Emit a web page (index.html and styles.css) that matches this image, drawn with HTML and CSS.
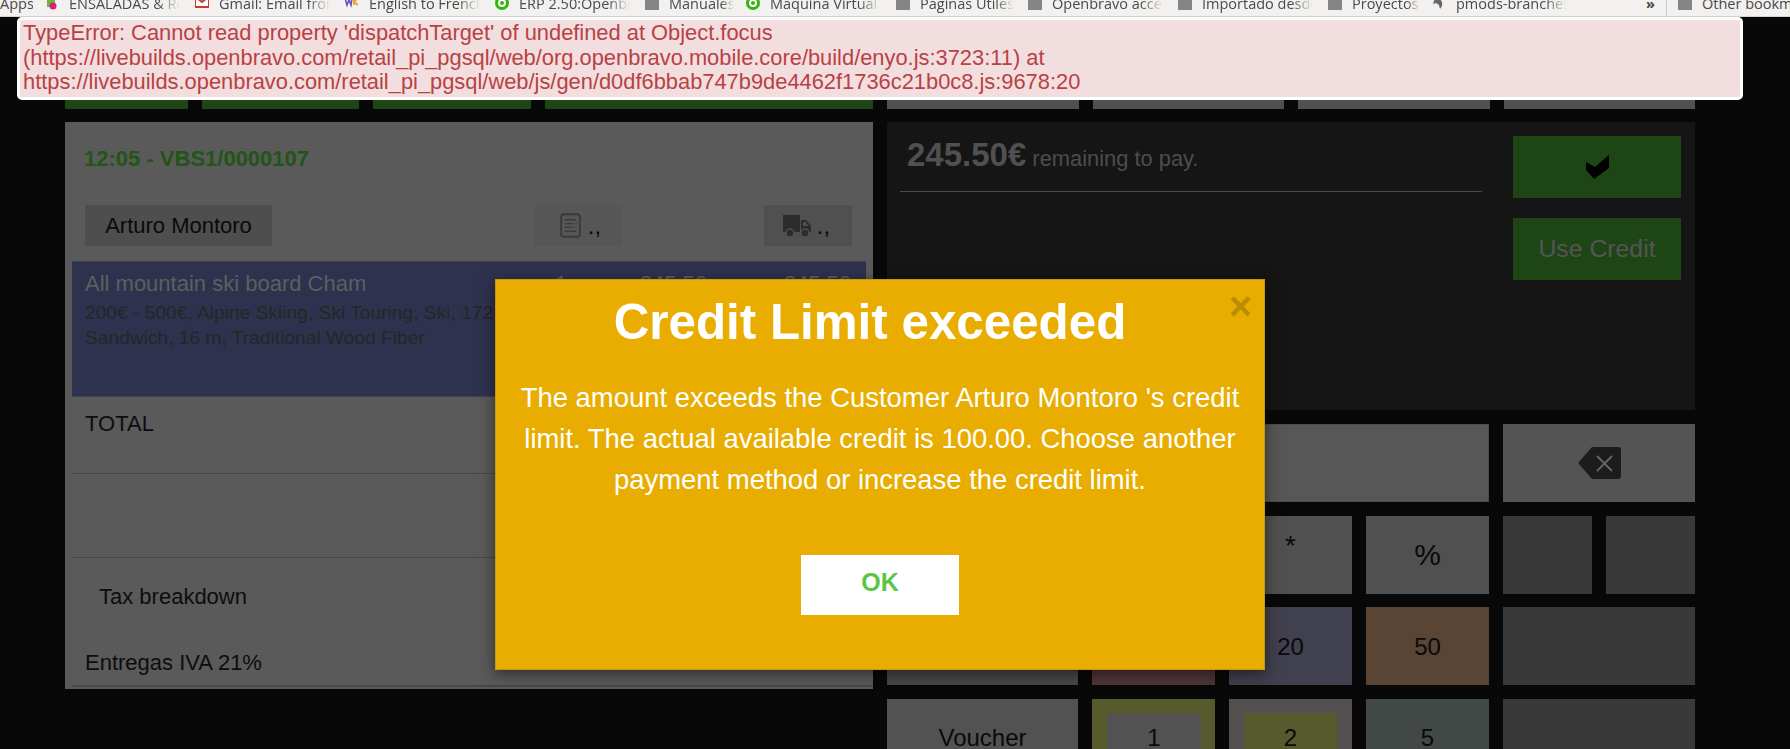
FILE: index.html
```html
<!DOCTYPE html>
<html lang="en">
<head>
<meta charset="utf-8">
<title>Credit Limit exceeded</title>
<link rel="stylesheet" href="styles.css">
</head>
<body>
<nav class="bookmarks">
  <span class="bm bm-apps">Apps</span>
  <span class="bm"><svg class="ic" viewBox="0 0 14 14"><rect x="2" width="8" height="10" fill="#6fb53c"/><circle cx="8" cy="9" r="3.5" fill="#d6247c"/></svg><span class="bm-t">ENSALADAS &amp; Recetas</span></span>
  <span class="bm"><svg class="ic" viewBox="0 0 14 14"><rect y="0" width="14" height="10" fill="#fff" stroke="#c63d2d" stroke-width="2"/><path d="M1 0l6 5 6-5" fill="none" stroke="#c63d2d" stroke-width="2"/></svg><span class="bm-t">Gmail: Email from Google</span></span>
  <span class="bm"><svg class="ic" viewBox="0 0 14 14"><path d="M0 1l2 7 2-5 2 5 1-7" fill="none" stroke="#6a4fc0" stroke-width="1.6"/><path d="M9 1v7M13 1L9 5l4 3" fill="none" stroke="#e8a020" stroke-width="1.6"/></svg><span class="bm-t">English to French</span></span>
  <span class="bm"><svg class="ic" viewBox="0 0 14 14"><circle cx="7" cy="6" r="5.5" fill="#fff" stroke="#33b512" stroke-width="3"/><circle cx="7" cy="6" r="2" fill="#33b512"/></svg><span class="bm-t">ERP 2.50:Openbravo</span></span>
  <span class="bm bm-short"><i class="folder"></i><span class="bm-t">Manuales</span></span>
  <span class="bm"><svg class="ic" viewBox="0 0 14 14"><circle cx="7" cy="6" r="5.5" fill="#fff" stroke="#33b512" stroke-width="3"/><circle cx="7" cy="6" r="2" fill="#33b512"/></svg><span class="bm-t">Maquina Virtual</span></span>
  <span class="bm bm-wide"><i class="folder"></i><span class="bm-t">Paginas Utiles</span></span>
  <span class="bm"><i class="folder"></i><span class="bm-t">Openbravo access</span></span>
  <span class="bm"><i class="folder"></i><span class="bm-t">Importado desde</span></span>
  <span class="bm bm-short bm-pro"><i class="folder"></i><span class="bm-t">Proyectos</span></span>
  <span class="bm"><svg class="ic" viewBox="0 0 14 14"><path d="M3 1c5 0 8 3 7 8l-2 3-1-4-3-2-3 1z" fill="#666"/></svg><span class="bm-t">pmods-branches</span></span>
  <span class="bm-more">»</span>
  <span class="bm-sep"></span>
  <span class="bm bm-other"><i class="folder"></i><span>Other bookmarks</span></span>
</nav>

<main class="pos">
  <div class="col">
    <div class="tabs">
      <div class="tab tab-g1"></div><div class="tab tab-g2"></div><div class="tab tab-g3"></div><div class="tab tab-g4"></div>
    </div>
    <section class="order">
      <h2 class="order-title">12:05 - VBS1/0000107</h2>
      <div class="order-bar">
        <div class="btn-cust">Arturo Montoro</div>
        <div class="btn-doc btn-doc-a">
          <svg class="doc-ic" viewBox="0 0 22 26"><rect x="1.2" y="1.2" width="19.6" height="23.6" rx="3" fill="none" stroke="#3a3a3a" stroke-width="2"/><path d="M5 7h12M5 11h9M5 15h9M5 19h12M16 11h2M16 15h2" stroke="#3a3a3a" stroke-width="1.4"/></svg>
          <span>.,</span>
        </div>
        <div class="btn-doc btn-doc-b">
          <svg class="truck-ic" viewBox="0 0 29 22"><path d="M0 0h17v17H0zM18 5h5l5 6v6H18z" fill="#2c2c2c"/><path d="M20 7h2.500l3 4H20z" fill="#505050"/><circle cx="7" cy="18" r="4" fill="#2c2c2c" stroke="#505050" stroke-width="1.500"/><circle cx="22" cy="18" r="4" fill="#2c2c2c" stroke="#505050" stroke-width="1.500"/></svg>
          <span>.,</span>
        </div>
      </div>
      <div class="line">
        <div class="line-main"><span class="line-name">All mountain ski board Cham</span><span class="line-qty">1</span><span class="line-price">245.50</span><span class="line-gross">245.50</span></div>
        <p class="line-desc">200€ - 500€, Alpine Skiing, Ski Touring, Ski, 172 cm,<br>Sandwich, 16 m, Traditional Wood Fiber</p>
      </div>
      <div class="total">TOTAL</div>
      <div class="blank"></div>
      <div class="tax-head">Tax breakdown</div>
      <div class="tax-row">Entregas IVA 21%</div>
    </section>
  </div>

  <div class="col">
    <div class="tabs tabs-right">
      <div class="tab tab-d"></div><div class="tab tab-d"></div><div class="tab tab-d"></div><div class="tab tab-d"></div>
    </div>
    <section class="pay">
      <div class="pay-info">
        <div class="pay-sum"><b>245.50€</b> remaining to pay.</div>
      </div>
      <div class="pay-actions">
        <div class="pay-btn"><svg class="check" viewBox="0 0 23 24"><path d="M0 7v8l8 9 15-11V0L9 12z" fill="#000"/></svg></div>
        <div class="pay-btn">Use Credit</div>
      </div>
    </section>
    <section class="keypad">
      <div class="key key-display"></div>
      <div class="key key-wide key-back"><svg class="back" viewBox="0 0 43 32"><path d="M14 0h26a3 3 0 0 1 3 3v26a3 3 0 0 1-3 3H14L0 16z" fill="#1c1c1c"/><path d="M19 9l15 15M34 9L19 24" stroke="#666" stroke-width="1.800"/></svg></div>

      <div class="key"></div><div class="key"></div>
      <div class="key key-star">*</div>
      <div class="key key-pct">%</div>
      <div class="key key-off"></div><div class="key key-off"></div>

      <div class="key key-dim"></div>
      <div class="key key-10"></div>
      <div class="key key-20">20</div>
      <div class="key key-50">50</div>
      <div class="key key-wide key-off"></div>

      <div class="key key-plain">Voucher</div>
      <div class="key key-y1"><span class="coin coin-grey">1</span></div>
      <div class="key key-y2"><span class="coin coin-yellow">2</span></div>
      <div class="key key-5">5</div>
      <div class="key key-wide key-off"></div>
    </section>
  </div>
</main>

<div class="toast">TypeError: Cannot read property 'dispatchTarget' of undefined at Object.focus (https://livebuilds.openbravo.com/retail_pi_pgsql/web/org.openbravo.mobile.core/build/enyo.js:3723:11) at https://livebuilds.openbravo.com/retail_pi_pgsql/web/js/gen/d0df6bbab747b9de4462f1736c21b0c8.js:9678:20</div>

<div class="modal">
  <span class="modal-x">×</span>
  <h1 class="modal-title">Credit Limit exceeded</h1>
  <p class="modal-body">The amount exceeds the Customer Arturo Montoro 's credit limit. The actual available credit is 100.00. Choose another payment method or increase the credit limit.</p>
  <button class="modal-ok">OK</button>
</div>
</body>
</html>
```
FILE: styles.css
```css
* { box-sizing: border-box; }
html, body { margin: 0; padding: 0; height: 749px; overflow: hidden; }
body { background: #080808; font-family: "Liberation Sans", Arial, sans-serif; color: #000; position: relative; }

.bookmarks { display: flex; align-items: flex-start; height: 25px; margin-top: -8px; padding-top: 3px; background: #f2f1f0; border-bottom: 1px solid #d2d2d2; font: 14.5px/18px "Open Sans", sans-serif; color: #4a4a4a; white-space: nowrap; overflow: hidden; }
.bm { display: flex; align-items: center; gap: 10px; width: 135px; margin-right: 15px; flex: none; overflow: hidden; }
.bm-apps { width: 33px; margin-right: 12px; }
.bm-short { width: 89px; margin-right: 12px; }
.bm-pro { width: 92px; }
.bm-wide { width: 118px; margin-right: 14px; }
.bm-t { overflow: hidden; flex: 1; -webkit-mask-image: linear-gradient(90deg, #000 80%, transparent); mask-image: linear-gradient(90deg, #000 80%, transparent); }
.ic { width: 14px; height: 14px; flex: none; }
.folder { width: 14px; height: 12px; flex: none; background: #858585; }
.bm-more { flex: none; margin-left: 64px; width: 20px; font-weight: 700; color: #444; }
.bm-sep { flex: none; width: 1px; height: 22px; background: #c8c8c8; margin-right: 11px; }
.bm-other { width: auto; margin: 0; }

.pos { display: grid; grid-template-columns: 808px 808px; column-gap: 14px; padding: 43px 0 0 65px; }
.col { display: flex; flex-direction: column; }
.tabs { display: flex; gap: 14px; height: 49px; margin-bottom: 13px; }
.tab { background: #1e4516; }
.tab-g1 { width: 123px; }
.tab-g2 { width: 157px; }
.tab-g3 { width: 158px; }
.tab-g4 { width: 328px; }
.tab-d { flex: 1; background: #505050; }

.order { height: 567px; background: #5a5a5a; }
.order-title { margin: 0; height: 83px; padding-left: 19px; font-size: 22px; line-height: 74px; font-weight: 700; color: #235418; }
.order-bar { display: flex; height: 41px; margin: 0 21px 15px 20px; }
.btn-cust { width: 187px; background: #4e4e4e; font-size: 22px; line-height: 41px; text-align: center; color: #0a0a0a; }
.btn-doc { display: flex; align-items: center; justify-content: center; gap: 7px; width: 88px; font-size: 24px; color: #0a0a0a; }
.btn-doc span { line-height: 30px; font-weight: 400; }
.btn-doc-a { margin-left: 262px; padding-left: 5px; background: #565656; }
.btn-doc-b { margin-left: 142px; padding-right: 3px; gap: 5px; background: #505050; }
.doc-ic { width: 21px; height: 25px; }
.truck-ic { width: 29px; height: 22px; }

.line { height: 136px; margin: 0 7px; padding: 9px 13px 0; background: #2e324e; border-top: 1px solid #42424e; border-bottom: 1px solid #42424e; }
.line-main { display: flex; font-size: 22px; line-height: 25px; color: #5f5f5f; }
.line-name { width: 470px; }
.line-qty { width: 20px; }
.line-price { width: 132px; text-align: right; }
.line-gross { width: 144px; text-align: right; }
.line-desc { margin: 5px 0 0; font-size: 19.2px; line-height: 24.5px; color: #262626; white-space: nowrap; }

.total { height: 77px; margin: 0 0 0 6px; padding-left: 14px; border-bottom: 1px solid #474747; font-size: 22px; line-height: 54px; color: #0d0d0d; }
.blank { height: 84px; margin-left: 6px; border-bottom: 1px solid #474747; }
.tax-head { height: 76px; padding-left: 34px; font-size: 22px; line-height: 78px; color: #0d0d0d; }
.tax-row { height: 53px; margin-left: 7px; padding-left: 13px; border-bottom: 2px solid #484848; font-size: 22px; line-height: 58px; color: #0d0d0d; }

.pay { display: flex; height: 288px; background: #151515; }
.pay-info { width: 582px; margin-left: 13px; flex: none; }
.pay-sum { height: 70px; padding-left: 7px; border-bottom: 1px solid #4a4a4a; font-size: 21.87px; line-height: 66px; color: #4d4d4d; white-space: nowrap; }
.pay-sum b { font-size: 33px; color: #505050; }
.pay-actions { display: flex; flex-direction: column; gap: 20px; margin: 14px 0 0 31px; }
.pay-btn { display: flex; align-items: center; justify-content: center; width: 168px; height: 62px; background: #1e4516; font-size: 24.8px; color: #555; }
.check { width: 23px; height: 24px; }

.keypad { display: grid; grid-template-columns: 191px 123px 123px 123px 89px 89px; grid-auto-rows: 78px; column-gap: 14px; row-gap: 13.67px; margin-top: 14px; }
.key { display: flex; align-items: center; justify-content: center; background: #505050; font-size: 24px; color: #0a0a0a; }
.key-display { grid-column: span 4; background: #575757; border: 1px solid #4c4c4c; }
.key-wide { grid-column: span 2; }
.key-back { background: #545454; }
.back { width: 43px; height: 32px; }
.key-star { font-size: 28px; align-items: flex-start; padding-top: 14px; }
.key-pct { font-size: 30px; }
.key-off { background: #393939; }
.key-dim { background: #484848; }
.key-10 { background: #4f3538; }
.key-20 { background: #40404e; padding-top: 2px; }
.key-50 { background: #5a4433; padding-top: 2px; }
.key-plain { background: #525252; }
.key-y1 { background: #575a2c; padding: 14px 14px 0 15px; }
.key-y2 { background: #545050; padding: 14px 15px 0 15px; }
.key-5 { background: #424845; }
.coin { display: flex; align-items: center; justify-content: center; width: 100%; height: 100%; padding-bottom: 14px; }
.coin-grey { background: #525252; }
.coin-yellow { background: #575a2c; }

.toast { position: absolute; left: 17px; top: 17px; width: 1726px; height: 83px; padding: 1px 3px; background: #f2dede; border: 3px solid #fff; border-radius: 5px; font-size: 21.87px; line-height: 24.5px; color: #b94145; }

.modal { position: absolute; left: 495px; top: 279px; width: 770px; height: 391px; padding: 0 20px; background: #e8ad00; border: 1px solid #c79a0c; box-shadow: 0 4px 14px rgba(0,0,0,.5); text-align: center; color: #fff; }
.modal-title { margin: 12px 20px 0 0; font-size: 49.33px; line-height: 60px; font-weight: 700; }
.modal-body { margin: 25px 0 0; font-size: 27.43px; line-height: 41px; }
.modal-x { position: absolute; top: 6px; right: 12px; font-size: 40px; line-height: 40px; font-weight: 700; color: #bb8c00; }
.modal-ok { display: block; width: 158px; height: 60px; margin: 55px 0 0 285px; padding: 0 0 6px; border: 0; background: #fff; font: 700 25px "Liberation Sans", Arial, sans-serif; color: #5cc545; }
```
